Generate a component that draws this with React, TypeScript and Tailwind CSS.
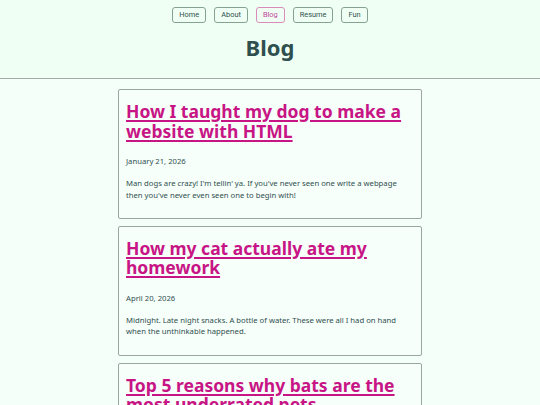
const navLinks = [
  { label: "Home", active: false },
  { label: "About", active: false },
  { label: "Blog", active: true },
  { label: "Resume", active: false },
  { label: "Fun", active: false },
]

const posts = [
  {
    title: "How I taught my dog to make a website with HTML",
    date: "January 21, 2026",
    blurb: "Man dogs are crazy! I'm tellin' ya. If you've never seen one write a webpage then you've never even seen one to begin with!",
  },
  {
    title: "How my cat actually ate my homework",
    date: "April 20, 2026",
    blurb: "Midnight. Late night snacks. A bottle of water. These were all I had on hand when the unthinkable happened.",
  },
  {
    title: "Top 5 reasons why bats are the most underrated pets",
    date: "March 3, 2026",
    blurb: "They hang upside down, they eat bugs, and they never ask for walks.",
  },
]

export default function App() {
  return (
    <div className="min-h-screen bg-[#f5fffa] text-[#2f4f4f] font-['Noto_Sans',sans-serif]">
      <header className="bg-[#f0fff4] border-b border-[#a3ada8] h-[79px] flex flex-col items-center">
        <nav className="flex gap-[8px] pt-[7px]">
          {navLinks.map((link) => (
            <a
              key={link.label}
              href="#"
              className={
                link.active
                  ? "h-[16px] px-[6px] flex items-center rounded-[3px] border border-[#d98cba] text-[#c2489a] text-[7.4px] font-['Roboto',sans-serif]"
                  : "h-[16px] px-[6px] flex items-center rounded-[3px] border border-[#86a293] text-[#2f4f4f] text-[7.4px] font-['Roboto',sans-serif]"
              }
            >
              {link.label}
            </a>
          ))}
        </nav>
        <h1 className="mt-[9px] text-[22px] leading-[30px] font-bold text-[#2f4f4f]">Blog</h1>
      </header>

      <main className="flex flex-col items-center gap-[7px] pt-[10px]">
        {posts.map((post) => (
          <article
            key={post.title}
            className="w-[304px] border border-[#9aa6a1] rounded-[2px] bg-[#f7fffb] px-[7px] pt-[12px] pb-[17px]"
          >
            <h2 className="text-[17.5px] leading-[19.5px] font-bold">
              <a href="#" className="text-[#c71585] underline decoration-[1.5px] underline-offset-[2px]">
                {post.title}
              </a>
            </h2>
            <p className="mt-[15px] text-[7.7px] leading-[11.3px] text-[#2f4f4f]">{post.date}</p>
            <p className="mt-[11px] text-[7.7px] leading-[11.3px] text-[#2f4f4f]">{post.blurb}</p>
          </article>
        ))}
      </main>
    </div>
  )
}
